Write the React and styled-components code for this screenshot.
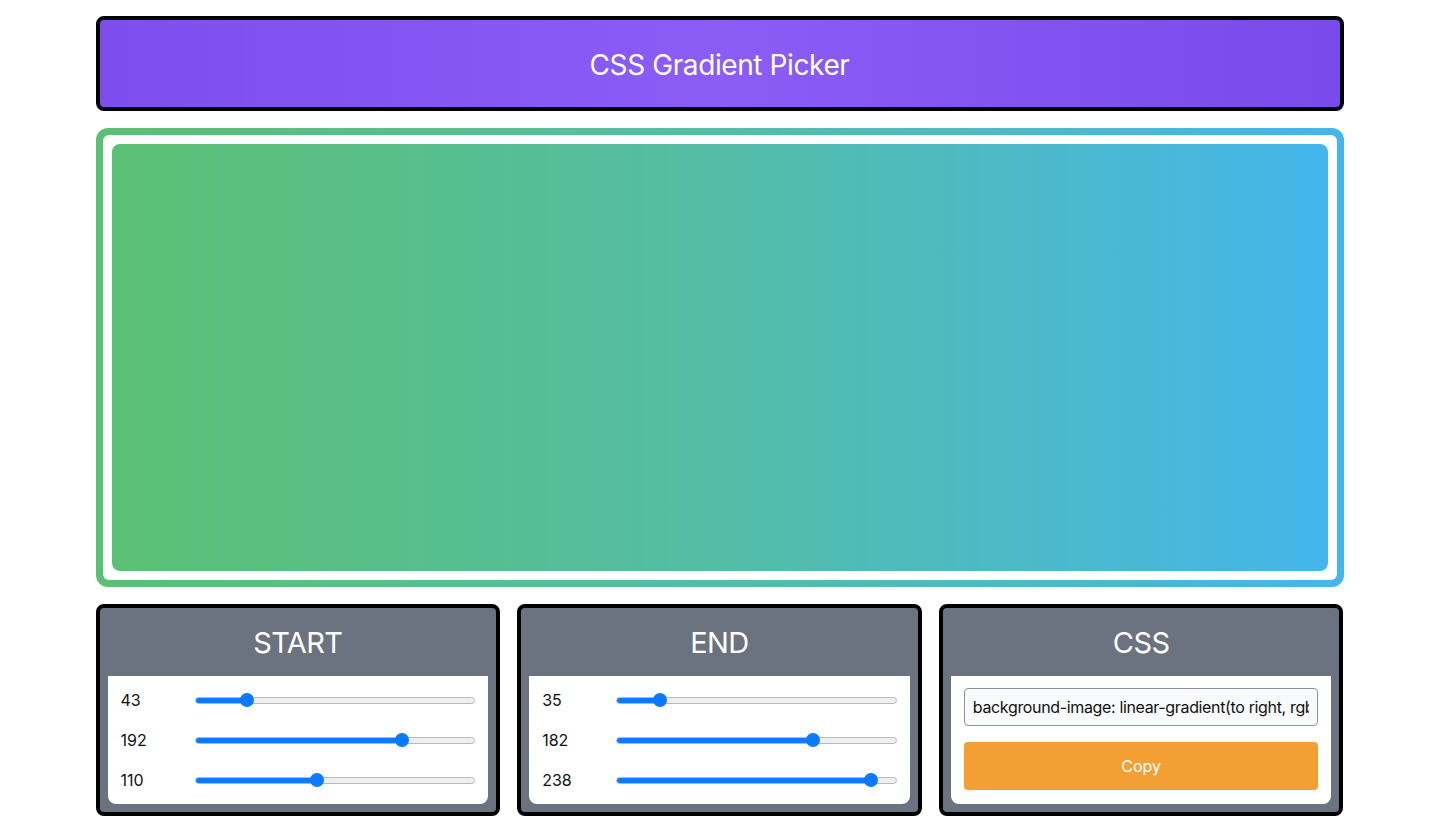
import React, { useState } from 'react'
import styled, { createGlobalStyle } from 'styled-components'

const GlobalStyle = createGlobalStyle`
  * { box-sizing: border-box; }
  html, body { margin: 0; height: 100%; }
  body {
    font-family: Inter, 'Liberation Sans', sans-serif;
    background: #fff;
    color: #111;
  }
`

const Page = styled.div`
  display: flex;
  flex-direction: column;
  gap: 17px;
  height: 100vh;
  max-width: 1248px;
  margin: 0 auto;
  padding: 16px 0 17px;
`

const Header = styled.header`
  display: flex;
  align-items: center;
  justify-content: center;
  height: 95px;
  flex-shrink: 0;
  border: 4px solid #000;
  border-radius: 8px;
  background: linear-gradient(to right, #7d4eed, #8b5cf6 50%, #7a4aea);
  color: #fff;
  font-size: 28px;
  font-weight: 400;
  letter-spacing: -0.4px;
  padding-top: 2px;
`

const PreviewFrame = styled.div`
  flex: 1;
  display: flex;
  padding: 7px;
  border-radius: 12px;
  background: ${p => p.$bg};
`

const PreviewInner = styled.div`
  flex: 1;
  display: flex;
  padding: 9px;
  border-radius: 6px;
  background: #fff;
`

const PreviewFill = styled.div`
  flex: 1;
  border-radius: 8px;
  background: ${p => p.$bg};
`

const Cards = styled.div`
  display: grid;
  grid-template-columns: repeat(3, 1fr);
  gap: 17px;
  height: 211px;
  flex-shrink: 0;
`

const Card = styled.section`
  display: flex;
  flex-direction: column;
  border: 4px solid #000;
  border-radius: 8px;
  background: #6b7280;
  padding: 0 8px 8px;
`

const CardTitle = styled.h2`
  margin: 0;
  height: 68px;
  display: flex;
  align-items: center;
  justify-content: center;
  color: #fff;
  font-size: 29px;
  font-weight: 400;
  letter-spacing: -0.6px;
`

const Panel = styled.div`
  flex: 1;
  display: flex;
  flex-direction: column;
  gap: 16px;
  padding: 12px 13px;
  background: #fff;
  border-radius: 0 0 8px 8px;
`

const Row = styled.div`
  display: flex;
  align-items: center;
  height: 24px;
`

const Value = styled.span`
  width: 74px;
  flex-shrink: 0;
  font-size: 16px;
  color: #111;
`

const Range = styled.input`
  -webkit-appearance: none;
  appearance: none;
  flex: 1;
  height: 7px;
  margin: 0;
  border: 1px solid #b9b9b9;
  border-radius: 4px;
  outline: none;

  &::-webkit-slider-thumb {
    -webkit-appearance: none;
    width: 14px;
    height: 14px;
    border-radius: 50%;
    background: #0a7aff;
    border: none;
    cursor: pointer;
  }
`

const CodeInput = styled.input`
  height: 38px;
  width: 100%;
  padding: 0 8px;
  border: 1px solid #8b93a1;
  border-radius: 4px;
  background: #f9fafb;
  font-family: Inter, 'Liberation Sans', sans-serif;
  font-size: 16px;
  letter-spacing: -0.35px;
  color: #111;
  outline: none;
`

const CopyButton = styled.button`
  height: 48px;
  width: 100%;
  border: none;
  border-radius: 4px;
  background: #f39f33;
  color: #fff;
  font-family: Inter, 'Liberation Sans', sans-serif;
  font-size: 16px;
  cursor: pointer;
`

const Slider = ({ value, onChange }) => {
  const pct = (value / 255) * 100
  return (
    <Row>
      <Value>{value}</Value>
      <Range
        type="range"
        min="0"
        max="255"
        value={value}
        onChange={e => onChange(Number(e.target.value))}
        style={{ background: `linear-gradient(to right, #0a7aff ${pct}%, #efefef ${pct}%)` }}
      />
    </Row>
  )
}

const ColorCard = ({ title, rgb, setRgb }) => (
  <Card>
    <CardTitle>{title}</CardTitle>
    <Panel>
      {rgb.map((v, i) => (
        <Slider key={i} value={v} onChange={n => setRgb(rgb.map((x, j) => (j === i ? n : x)))} />
      ))}
    </Panel>
  </Card>
)

const App = () => {
  const [start, setStart] = useState([43, 192, 110])
  const [end, setEnd] = useState([35, 182, 238])

  const css = `background-image: linear-gradient(to right, rgb(${start.join(', ')}), rgb(${end.join(', ')}));`
  // displayed colours are a touch lighter than the raw values in the reference
  const gradient = 'linear-gradient(to right, #5bc073, #54bda6 50%, #44b6eb)'

  return (
    <>
      <GlobalStyle />
      <Page>
        <Header>CSS Gradient Picker</Header>
        <PreviewFrame $bg={gradient}>
          <PreviewInner>
            <PreviewFill $bg={gradient} />
          </PreviewInner>
        </PreviewFrame>
        <Cards>
          <ColorCard title="START" rgb={start} setRgb={setStart} />
          <ColorCard title="END" rgb={end} setRgb={setEnd} />
          <Card>
            <CardTitle>CSS</CardTitle>
            <Panel>
              <CodeInput readOnly value={css} />
              <CopyButton onClick={() => navigator.clipboard && navigator.clipboard.writeText(css)}>Copy</CopyButton>
            </Panel>
          </Card>
        </Cards>
      </Page>
    </>
  )
}

export default App
